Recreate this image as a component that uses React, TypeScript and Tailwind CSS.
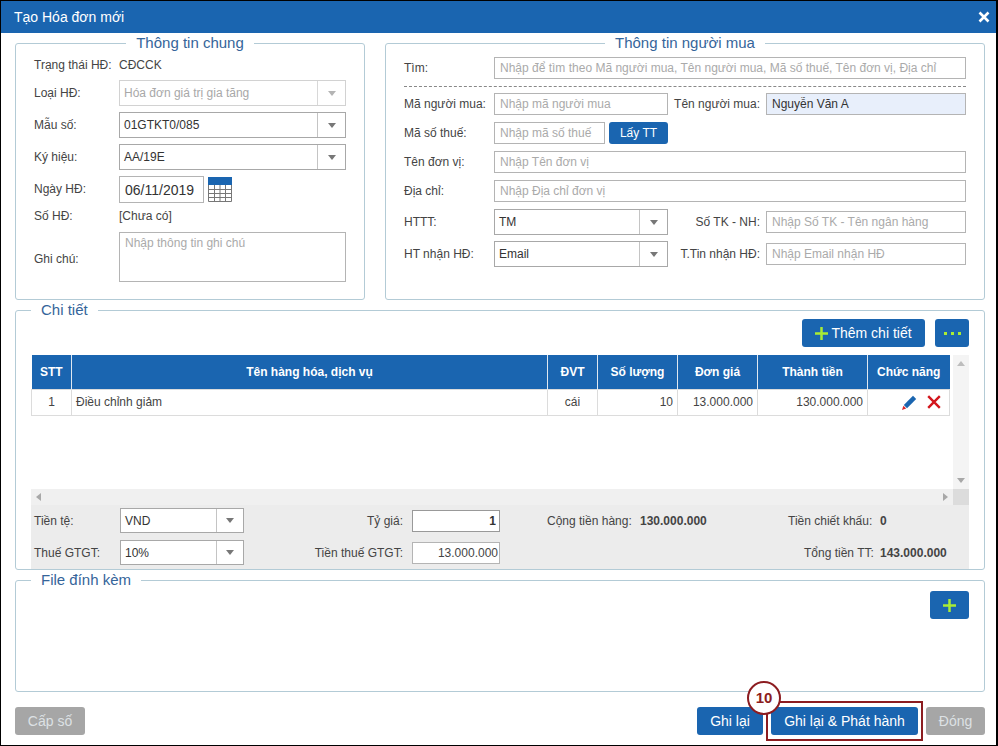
import type { ReactNode } from 'react';

const inputBase =
  'h-[22px] border border-[#b4b4b4] px-[5px] text-[12px] text-[#333] outline-none placeholder:text-[#aaa]';

function Field({ placeholder, className = '', value }: { placeholder?: string; className?: string; value?: string }) {
  return <input readOnly placeholder={placeholder} defaultValue={value} className={`${inputBase} ${className}`} />;
}

function Select({
  value,
  className = '',
  caretWidth = 'w-[28px]',
  disabled = false,
}: {
  value: string;
  className?: string;
  caretWidth?: string;
  disabled?: boolean;
}) {
  return (
    <div className={`flex items-stretch border bg-white ${disabled ? 'border-[#d2d2d2] text-[#a8a8a8]' : 'border-[#a8a8a8] text-[#333]'} ${className}`}>
      <div className="flex flex-1 items-center pl-[4px] text-[12px]">{value}</div>
      <div className={`flex items-center justify-center border-l ${disabled ? 'border-[#d8d8d8]' : 'border-[#c4c4c4]'} ${caretWidth}`}>
        <svg width="8" height="5" viewBox="0 0 8 5">
          <path d="M0 0h8L4 5z" fill={disabled ? '#b4b4b4' : '#777'} />
        </svg>
      </div>
    </div>
  );
}

function Box({ title, centered, className = '', children }: { title: string; centered?: boolean; className?: string; children: ReactNode }) {
  return (
    <fieldset className={`min-w-0 rounded-[3px] border border-[#b3cbd6] ${className}`}>
      <legend className={`h-[20px] px-[10px] text-[15px] leading-[20px] text-[#35659a] ${centered ? 'mx-auto' : ''}`}>{title}</legend>
      {children}
    </fieldset>
  );
}

function Btn({ children, className = '' }: { children: ReactNode; className?: string }) {
  return (
    <button className={`flex items-center justify-center rounded-[3px] ${className}`}>
      {children}
    </button>
  );
}

const blueBtn = 'h-[28px] bg-[#1a65b0] text-[14px] text-white';
const grayBtn = 'h-[28px] bg-[#a6a6a6] text-[14px] text-[#dde1e4]';

function PlusIcon() {
  return (
    <svg width="13" height="13" viewBox="0 0 13 13">
      <path d="M5.25 0h2.5v5.25H13v2.5H7.75V13h-2.5V7.75H0v-2.5h5.25z" fill="#a9ec34" />
    </svg>
  );
}

function CalendarIcon() {
  return (
    <svg width="24" height="25" viewBox="0 0 24 25" className="ml-[4px]">
      <rect x="0" y="0" width="24" height="8" fill="#1a65b0" />
      <path
        d="M.5 8v16.5h23V8M.5 12.5h23M.5 16.5h23M.5 20.5h23M6.5 8v16.5M12 8v16.5M17.5 8v16.5"
        fill="none"
        stroke="#777"
        strokeWidth="1"
      />
    </svg>
  );
}

const columns = [
  { label: 'STT', width: 'w-[40px]' },
  { label: 'Tên hàng hóa, dịch vụ', width: 'w-[476px]' },
  { label: 'ĐVT', width: 'w-[50px]' },
  { label: 'Số lượng', width: 'w-[80px]' },
  { label: 'Đơn giá', width: 'w-[80px]' },
  { label: 'Thành tiền', width: 'w-[110px]' },
  { label: 'Chức năng', width: 'w-[82px]' },
];

function BuyerRow({ label, children, className = 'mt-[7px]' }: { label: string; children: ReactNode; className?: string }) {
  return (
    <div className={`flex items-center ${className}`}>
      <div className="w-[90px] shrink-0">{label}</div>
      {children}
    </div>
  );
}

function GeneralRow({
  label,
  children,
  className = 'mt-[6px]',
  labelClassName = '',
}: {
  label: string;
  children: ReactNode;
  className?: string;
  labelClassName?: string;
}) {
  return (
    <div className={`flex items-center ${className}`}>
      <div className={`w-[85px] shrink-0 ${labelClassName}`}>{label}</div>
      {children}
    </div>
  );
}

export default function App() {
  return (
    <div className="flex h-[746px] w-[998px] flex-col overflow-hidden border-t border-r-2 border-b border-l border-black bg-white text-[12px] text-[#444] [font-family:'Liberation_Sans',Arial,sans-serif]">
      {/* Title bar */}
      <div className="flex h-[32px] shrink-0 items-center justify-between bg-[#1a65b0] pr-[6px] pl-[13px] text-white">
        <span className="text-[14px]">Tạo Hóa đơn mới</span>
        <svg width="12" height="12" viewBox="0 0 12 12">
          <path d="M1.5 1.5l9 9M10.5 1.5l-9 9" stroke="#fff" strokeWidth="2.6" fill="none" />
        </svg>
      </div>

      <div className="flex flex-col pr-[11px] pl-[14px]">
        {/* Top boxes */}
        <div className="flex h-[267px] gap-[20px]">
          <Box title="Thông tin chung" centered className="w-[350px] px-[18px]">
            <GeneralRow label="Trạng thái HĐ:" className="mt-[1px] h-[21px]">
              <span>CĐCCK</span>
            </GeneralRow>
            <GeneralRow label="Loại HĐ:" className="mt-[5px]" labelClassName="-mt-[1px]">
              <Select value="Hóa đơn giá trị gia tăng" disabled className="h-[26px] w-[227px]" />
            </GeneralRow>
            <GeneralRow label="Mẫu số:" labelClassName="-mt-[1px]">
              <Select value="01GTKT0/085" className="h-[26px] w-[227px]" />
            </GeneralRow>
            <GeneralRow label="Ký hiệu:" labelClassName="-mt-[1px]">
              <Select value="AA/19E" className="h-[26px] w-[227px]" />
            </GeneralRow>
            <GeneralRow label="Ngày HĐ:" labelClassName="-mt-[1px]">
              <Field value="06/11/2019" className="h-[27px] w-[85px] text-[14px]" />
              <CalendarIcon />
            </GeneralRow>
            <GeneralRow label="Số HĐ:" className="mt-[4px] h-[18px]">
              <span>[Chưa có]</span>
            </GeneralRow>
            <GeneralRow label="Ghi chú:" className="mt-[7px]" labelClassName="mt-[3px]">
              <textarea
                readOnly
                placeholder="Nhập thông tin ghi chú"
                className="h-[50px] w-[227px] resize-none border border-[#b4b4b4] px-[5px] py-[1px] text-[12px] outline-none placeholder:text-[#aaa]"
              />
            </GeneralRow>
          </Box>

          <Box title="Thông tin người mua" centered className="w-[600px] px-[18px]">
            <BuyerRow label="Tìm:" className="mt-[4px]">
              <Field placeholder="Nhập để tìm theo Mã người mua, Tên người mua, Mã số thuế, Tên đơn vị, Địa chỉ" className="w-[472px]" />
            </BuyerRow>
            <div className="mt-[7px] border-t border-dashed border-[#888]" />
            <BuyerRow label="Mã người mua:" className="mt-[6px]">
              <Field placeholder="Nhập mã người mua" className="w-[174px]" />
              <div className="w-[92px] shrink-0 text-right">Tên người mua:</div>
              <Field value="Nguyễn Văn A" className="ml-[6px] w-[200px] bg-[#e8effb] text-[#222]" />
            </BuyerRow>
            <BuyerRow label="Mã số thuế:">
              <Field placeholder="Nhập mã số thuế" className="w-[111px]" />
              <Btn className="ml-[4px] h-[22px] w-[59px] bg-[#1a65b0] text-[12px] text-white">Lấy TT</Btn>
            </BuyerRow>
            <BuyerRow label="Tên đơn vị:">
              <Field placeholder="Nhập Tên đơn vị" className="w-[472px]" />
            </BuyerRow>
            <BuyerRow label="Địa chỉ:">
              <Field placeholder="Nhập Địa chỉ đơn vị" className="w-[472px]" />
            </BuyerRow>
            <BuyerRow label="HTTT:">
              <Select value="TM" className="h-[26px] w-[174px]" />
              <div className="w-[92px] shrink-0 text-right">Số TK - NH:</div>
              <Field placeholder="Nhập Số TK - Tên ngân hàng" className="ml-[6px] w-[200px]" />
            </BuyerRow>
            <BuyerRow label="HT nhận HĐ:" className="mt-[6px]">
              <Select value="Email" className="h-[26px] w-[174px]" />
              <div className="w-[92px] shrink-0 text-right">T.Tin nhận HĐ:</div>
              <Field placeholder="Nhập Email nhận HĐ" className="ml-[6px] w-[200px]" />
            </BuyerRow>
          </Box>
        </div>

        {/* Chi tiet */}
        <Box title="Chi tiết" className="h-[270px] px-[15px]">
          <div className="-mt-[1px] flex justify-end gap-[10px]">
            <Btn className={`${blueBtn} w-[123px] gap-[3px]`}>
              <PlusIcon />
              Thêm chi tiết
            </Btn>
            <Btn className={`${blueBtn} w-[34px] gap-[4px]`}>
              <span className="h-[3px] w-[3px] bg-[#a9ec34]" />
              <span className="h-[3px] w-[3px] bg-[#a9ec34]" />
              <span className="h-[3px] w-[3px] bg-[#a9ec34]" />
            </Btn>
          </div>

          <div className="mt-[8px] flex h-[134px]">
            <div className="w-[922px]">
              <table className="w-[918px] table-fixed border-collapse text-[12px]">
                <thead>
                  <tr className="h-[34px] bg-[#1a65b0] text-white">
                    {columns.map((c) => (
                      <th key={c.label} className={`border-r border-[#dfe8f1] font-bold last:border-r-0 ${c.width}`}>
                        {c.label}
                      </th>
                    ))}
                  </tr>
                </thead>
                <tbody>
                  <tr className="h-[26px] text-[#444] [&>td]:border [&>td]:border-[#dcdcdc]">
                    <td className="text-center">1</td>
                    <td className="pl-[4px]">Điều chỉnh giảm</td>
                    <td className="text-center">cái</td>
                    <td className="pr-[4px] text-right">10</td>
                    <td className="pr-[4px] text-right">13.000.000</td>
                    <td className="pr-[4px] text-right">130.000.000</td>
                    <td>
                      <div className="flex items-center justify-end gap-[10px] pr-[8px]">
                        <svg width="15" height="15" viewBox="0 0 15 15">
                          <path d="M11 .8l3.2 3.2L5 13.2 1.8 10z" fill="#1a65b0" />
                          <path d="M1.4 10.8l2.8 2.8L0 15z" fill="#d9252a" />
                        </svg>
                        <svg width="14" height="14" viewBox="0 0 14 14">
                          <path d="M1.2 1.2l11.6 11.6M12.8 1.2L1.2 12.8" stroke="#d3161d" strokeWidth="2.4" fill="none" />
                        </svg>
                      </div>
                    </td>
                  </tr>
                </tbody>
              </table>
            </div>
            <div className="flex w-[16px] flex-col items-center justify-between bg-[#f4f4f4] py-[6px]">
              <svg width="8" height="5" viewBox="0 0 8 5">
                <path d="M0 5h8L4 0z" fill="#bdbdbd" />
              </svg>
              <svg width="8" height="5" viewBox="0 0 8 5">
                <path d="M0 0h8L4 5z" fill="#a8a8a8" />
              </svg>
            </div>
          </div>

          <div className="flex h-[16px] items-center bg-[#f0f0f0]">
            <div className="flex flex-1 items-center justify-between px-[5px]">
              <svg width="5" height="8" viewBox="0 0 5 8">
                <path d="M5 0v8L0 4z" fill="#a8a8a8" />
              </svg>
              <svg width="5" height="8" viewBox="0 0 5 8">
                <path d="M0 0v8l5-4z" fill="#a8a8a8" />
              </svg>
            </div>
            <div className="h-[16px] w-[16px] bg-[#dcdcdc]" />
          </div>

          {/* Totals */}
          <div className="h-[64px] bg-[#ececec] pt-[3px] pl-[3px]">
            <div className="flex h-[25px] items-center">
              <div className="w-[86px]">Tiền tệ:</div>
              <Select value="VND" caretWidth="w-[27px]" className="h-[25px] w-[124px]" />
              <div className="w-[159px] text-right">Tỷ giá:</div>
              <input readOnly defaultValue="1" className="ml-[9px] h-[22px] w-[88px] border border-[#999] bg-white px-[3px] text-right text-[12px] font-bold text-[#333] outline-none" />
              <div className="ml-[47px] w-[93px]">Cộng tiền hàng:</div>
              <div className="w-[148px] font-bold">130.000.000</div>
              <div className="w-[92px]">Tiền chiết khấu:</div>
              <div className="font-bold">0</div>
            </div>
            <div className="mt-[7px] flex h-[25px] items-center">
              <div className="w-[86px]">Thuế GTGT:</div>
              <Select value="10%" caretWidth="w-[27px]" className="h-[25px] w-[124px]" />
              <div className="w-[159px] text-right">Tiền thuế GTGT:</div>
              <input readOnly defaultValue="13.000.000" className="ml-[9px] h-[22px] w-[88px] border border-[#b4b4b4] bg-white px-[1px] text-right text-[12px] text-[#444] outline-none" />
              <div className="ml-[304px] w-[76px]">Tổng tiền TT:</div>
              <div className="font-bold">143.000.000</div>
            </div>
          </div>
        </Box>

        {/* File dinh kem */}
        <Box title="File đính kèm" className="h-[122px] px-[15px]">
          <div className="mt-[1px] flex justify-end">
            <Btn className={`${blueBtn} w-[39px]`}>
              <PlusIcon />
            </Btn>
          </div>
        </Box>

        {/* Footer */}
        <div className="mt-[15px] flex items-center">
          <Btn className={`${grayBtn} w-[70px]`}>Cấp số</Btn>
          <div className="ml-auto flex gap-[8px]">
            <Btn className={`${blueBtn} w-[66px]`}>Ghi lại</Btn>
            <div className="relative">
              <Btn className={`${blueBtn} w-[147px]`}>Ghi lại &amp; Phát hành</Btn>
              <div className="absolute -top-[6px] -right-[5px] -bottom-[6px] -left-[5px] border-2 border-[#8c1c20]" />
              <div className="absolute -top-[26px] -left-[24px] flex h-[34px] w-[34px] items-center justify-center rounded-full border-2 border-[#8c1c20] bg-white text-[15px] font-bold text-[#8c1c20]">
                10
              </div>
            </div>
            <Btn className={`${grayBtn} w-[59px]`}>Đóng</Btn>
          </div>
        </div>
      </div>
    </div>
  );
}
